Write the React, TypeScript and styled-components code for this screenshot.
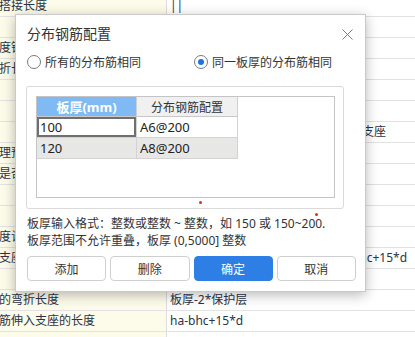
import React from 'react'
import styled, { createGlobalStyle } from 'styled-components'

const GlobalStyle = createGlobalStyle`
  html, body {
    margin: 0;
    padding: 0;
    background: #fff;
    overflow: hidden;
  }
  body {
    font-family: "Noto Sans", "Noto Sans CJK SC", sans-serif;
    color: #333;
  }
`

interface BgRowData {
  left: string
  right: string
}

const bgRows: BgRowData[] = [
  { left: '搭接长度', right: '||' },
  { left: '', right: '' },
  { left: '度锚固', right: '' },
  { left: '折长度', right: '' },
  { left: '', right: '' },
  { left: '', right: '' },
  { left: '', right: '板厚大于等于支座宽度时，钢筋伸入支座' },
  { left: '理预留', right: '' },
  { left: '是否', right: '' },
  { left: '', right: '' },
  { left: '', right: '' },
  { left: '度计算', right: '' },
  { left: '支座', right: '弯锚时伸入支座的长度取值La=ha-bhc+15*d' },
  { left: '', right: '' },
  { left: '的弯折长度', right: '板厚-2*保护层' },
  { left: '筋伸入支座的长度', right: 'ha-bhc+15*d' },
  { left: '', right: '' },
]

const tableRows = [
  { thick: '100', config: 'A6@200', selected: true, shaded: false },
  { thick: '120', config: 'A8@200', selected: false, shaded: true },
]

const App = () => {
  const [mode, setMode] = React.useState<'all' | 'byThick'>('byThick')
  return (
    <Page>
      <GlobalStyle />
      <BgTable>
        {bgRows.map((r, i) => (
          <BgRow key={i}>
            <BgLeft>{r.left}</BgLeft>
            <BgRight>{r.right}</BgRight>
          </BgRow>
        ))}
      </BgTable>

      <Dialog>
        <TitleBar>
          <Title>分布钢筋配置</Title>
          <CloseButton type="button">
            <svg width="11" height="11" viewBox="0 0 11 11">
              <path d="M0.5 0.5 L10.5 10.5 M10.5 0.5 L0.5 10.5" stroke="#7d7d7d" strokeWidth="1" fill="none" />
            </svg>
          </CloseButton>
        </TitleBar>

        <RadioRow>
          <RadioLabel onClick={() => setMode('all')}>
            <RadioCircle $checked={mode === 'all'} />
            所有的分布筋相同
          </RadioLabel>
          <RadioLabel onClick={() => setMode('byThick')}>
            <RadioCircle $checked={mode === 'byThick'} />
            同一板厚的分布筋相同
          </RadioLabel>
        </RadioRow>

        <GroupBox>
          <GridBox>
            <HeadCell $primary>板厚(mm)</HeadCell>
            <HeadCell>分布钢筋配置</HeadCell>
            {tableRows.map((r) => (
              <React.Fragment key={r.thick}>
                <Cell $shaded={r.shaded} $selected={r.selected}>{r.thick}</Cell>
                <Cell $shaded={r.shaded}>{r.config}</Cell>
              </React.Fragment>
            ))}
          </GridBox>
        </GroupBox>

        <HelpText>
          <div>板厚输入格式：整数或整数 ~ 整数，如 150 或 150~200.</div>
          <div>板厚范围不允许重叠，板厚 (0,5000] 整数</div>
        </HelpText>

        <ButtonRow>
          <Button type="button">添加</Button>
          <Button type="button">删除</Button>
          <Button type="button" $primary>确定</Button>
          <Button type="button">取消</Button>
        </ButtonRow>

        <RedDot $x={182.5} $y={185.5} />
        <RedDot $x={298.5} $y={198} />
      </Dialog>
    </Page>
  )
}

const Page = styled.div`
  position: relative;
  width: 415px;
  height: 337px;
  overflow: hidden;
`

const BgTable = styled.div`
  margin-top: -4px;
  display: flex;
  flex-direction: column;
`

const BgRow = styled.div`
  display: grid;
  grid-template-columns: 167px 1fr;
  height: 21px;
  box-sizing: border-box;
  border-bottom: 1px solid #e2e2e2;
  font-size: 12px;
  line-height: 20px;
  color: #2b3346;
`

const BgLeft = styled.div`
  background: #fdfbea;
  border-right: 1px solid #dcdcdc;
  white-space: nowrap;
  overflow: hidden;
  text-indent: -1px;
`

const BgRight = styled.div`
  padding-left: 3px;
  white-space: nowrap;
  overflow: hidden;
`

const Dialog = styled.div`
  position: absolute;
  top: 14px;
  left: 15px;
  width: 351px;
  box-sizing: border-box;
  background: #fff;
  border: 1px solid #c9c9c9;
  box-shadow: 0 3px 12px rgba(0, 0, 0, 0.28);
  padding: 11px 9px 10px 11px;
`

const TitleBar = styled.div`
  display: flex;
  justify-content: space-between;
  align-items: center;
  height: 16px;
`

const Title = styled.div`
  font-size: 14px;
  line-height: 16px;
  color: #333;
`

const CloseButton = styled.button`
  border: 0;
  background: transparent;
  padding: 0;
  margin-right: 3px;
  width: 11px;
  height: 11px;
  display: flex;
  cursor: pointer;
`

const RadioRow = styled.div`
  display: grid;
  grid-template-columns: 167px auto;
  margin-top: 11px;
  height: 16px;
  align-items: center;
`

const RadioLabel = styled.label`
  display: flex;
  align-items: center;
  gap: 4px;
  font-size: 12px;
  color: #333;
  cursor: pointer;
`

const RadioCircle = styled.span<{ $checked: boolean }>`
  width: 14px;
  height: 14px;
  box-sizing: border-box;
  border: 1px solid #7a7a7a;
  border-radius: 50%;
  background: #fff;
  display: flex;
  align-items: center;
  justify-content: center;
  &::after {
    content: '';
    width: 6px;
    height: 6px;
    border-radius: 50%;
    background: ${(p) => (p.$checked ? '#1b74e4' : 'transparent')};
  }
`

const GroupBox = styled.div`
  margin: 17px 12px 0 -1px;
  border: 1px solid #dadada;
  border-radius: 3px;
  padding: 9px 8px 10px 9px;
`

const GridBox = styled.div`
  height: 102px;
  box-sizing: border-box;
  border: 1px solid #c4c4c4;
  display: grid;
  grid-template-columns: 100px 101px;
  grid-auto-rows: 21px;
  grid-template-rows: 20px;
  align-content: start;
`

const HeadCell = styled.div<{ $primary?: boolean }>`
  background: ${(p) => (p.$primary ? '#7fbaf5' : '#f0f0f0')};
  color: ${(p) => (p.$primary ? '#fff' : '#333')};
  font-weight: ${(p) => (p.$primary ? 700 : 400)};
  font-size: ${(p) => (p.$primary ? '13px' : '12px')};
  border-right: 1px solid #cfcfcf;
  border-bottom: 1px solid #c8c8c8;
  display: flex;
  align-items: center;
  justify-content: center;
`

const Cell = styled.div<{ $shaded?: boolean; $selected?: boolean }>`
  background: ${(p) => (p.$shaded ? '#e7e7e5' : '#fff')};
  border-right: 1px solid #d3d3d3;
  border-bottom: 1px solid #d3d3d3;
  box-shadow: ${(p) => (p.$selected ? 'inset 0 0 0 2px #6f6f6f' : 'none')};
  padding-left: 3px;
  font-size: 13px;
  line-height: 20px;
  color: #222;
`

const HelpText = styled.div`
  margin-top: 6px;
  font-size: 12px;
  line-height: 17px;
  color: #333;
`

const ButtonRow = styled.div`
  display: grid;
  grid-template-columns: repeat(4, 1fr);
  gap: 4px;
  margin-top: 7px;
  margin-left: 0;
`

const Button = styled.button<{ $primary?: boolean }>`
  height: 25px;
  border-radius: 4px;
  border: 1px solid ${(p) => (p.$primary ? '#2d7fe6' : '#cfcfcf')};
  background: ${(p) => (p.$primary ? '#2d7fe6' : '#fff')};
  color: ${(p) => (p.$primary ? '#fff' : '#333')};
  font-family: inherit;
  font-size: 12px;
  padding: 0;
  cursor: pointer;
`

const RedDot = styled.span<{ $x: number; $y: number }>`
  position: absolute;
  left: ${(p) => p.$x}px;
  top: ${(p) => p.$y}px;
  width: 3px;
  height: 3px;
  border-radius: 50%;
  background: #e5262b;
`

export default App
